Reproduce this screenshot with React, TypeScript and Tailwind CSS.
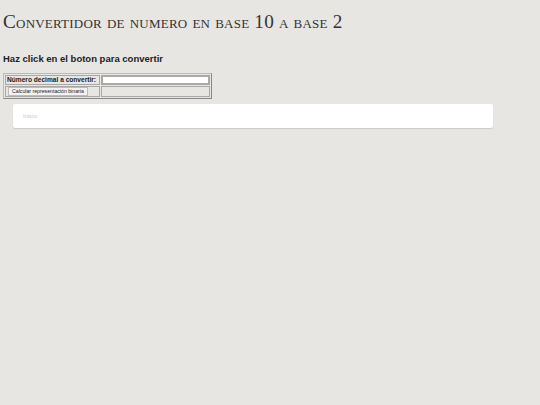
export default function App() {
  return (
    <div className="min-h-[405px] w-full bg-[#e8e6e2] pt-[10px]" style={{ fontFamily: '"Liberation Sans", Arial, sans-serif' }}>
      <h1
        className="ml-[3px] text-[19.2px] leading-[24px] tracking-[0.22px] text-[#333] [font-variant:small-caps]"
        style={{ fontFamily: '"Liberation Serif", "Times New Roman", serif' }}
      >
        Convertidor de numero en base 10 a base 2
      </h1>
      <h2 className="ml-[3px] mt-[19px] text-[9.5px] font-bold leading-[12px] text-[#222]">
        Haz click en el boton para convertir
      </h2>
      <table className="ml-[3px] mt-[8px] w-[209px] border-separate border border-t-[#bbb] border-l-[#bbb] border-b-[#888] border-r-[#888] bg-[#e8e6e2] [border-spacing:1px]">
        <tbody>
          <tr>
            <td className="h-[10px] w-[95px] whitespace-nowrap border border-[#a8a8a8] px-[1px] py-0 text-[6.6px] font-bold leading-[8px] text-[#222]">
              Número decimal a convertir:
            </td>
            <td className="border border-[#a8a8a8] p-0">
              <input type="text" className="block h-[8px] w-full border border-[#aaa] bg-white p-0" />
            </td>
          </tr>
          <tr>
            <td className="h-[10px] border border-[#a8a8a8] p-0">
              <button className="ml-[2px] block h-[9px] whitespace-nowrap border border-[#bbb] bg-[#f2f2f2] px-[3px] text-[5.2px] leading-[7px] text-[#222]">
                Calcular representación binaria
              </button>
            </td>
            <td className="border border-[#a8a8a8] p-0"></td>
          </tr>
        </tbody>
      </table>
      <div className="ml-[13px] mt-[5px] h-[24px] w-[480px] rounded-[2px] bg-white px-[10px] shadow-[0_1px_1px_rgba(0,0,0,0.12)]">
        <p className="pt-[8px] text-[6px] leading-[8px] text-[#c8c8c8]">Inicio</p>
      </div>
    </div>
  );
}
